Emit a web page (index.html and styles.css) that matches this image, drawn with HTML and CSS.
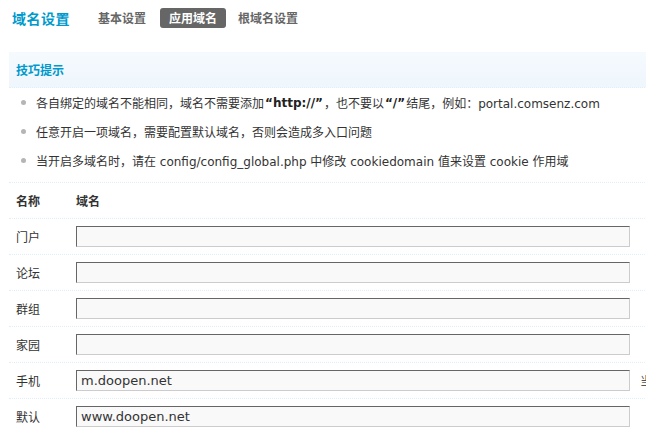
FILE: index.html
```html
<!DOCTYPE html>
<html lang="zh-CN">
<head>
<meta charset="utf-8">
<title>域名设置</title>
<link rel="stylesheet" href="styles.css">
</head>
<body>
<div class="page">
  <div class="itemtitle">
    <h3 class="title">域名设置</h3>
    <ul class="tabs">
      <li class="tab">基本设置</li>
      <li class="tab current">应用域名</li>
      <li class="tab">根域名设置</li>
    </ul>
  </div>

  <div class="tips">
    <div class="tips-head">技巧提示</div>
    <ul class="tips-list">
      <li>各自绑定的域名不能相同，域名不需要添加<b>“http://”</b>，也不要以<b>“/”</b>结尾，例如：portal.comsenz.com</li>
      <li>任意开启一项域名，需要配置默认域名，否则会造成多入口问题</li>
      <li>当开启多域名时，请在 config/config_global.php 中修改 cookiedomain 值来设置 cookie 作用域</li>
    </ul>
  </div>

  <div class="tb">
    <div class="row head"><span>名称</span><span>域名</span></div>
    <div class="row"><span>门户</span><input class="txt" type="text" value=""></div>
    <div class="row"><span>论坛</span><input class="txt" type="text" value=""></div>
    <div class="row"><span>群组</span><input class="txt" type="text" value=""></div>
    <div class="row"><span>家园</span><input class="txt" type="text" value=""></div>
    <div class="row"><span>手机</span><input class="txt" type="text" value="m.doopen.net"><span class="comment">当</span></div>
    <div class="row"><span>默认</span><input class="txt" type="text" value="www.doopen.net"></div>
  </div>
</div>
</body>
</html>
```

FILE: styles.css
```css
html, body {
  margin: 0;
  padding: 0;
  overflow: hidden;
  background: #fff;
}

body {
  font-family: "DejaVu Sans", "Noto Sans CJK SC", sans-serif;
  font-size: 12px;
  color: #333;
}

.page {
  width: 646px;
  height: 434px;
  overflow: hidden;
  padding-left: 9px;
  box-sizing: border-box;
}

.itemtitle {
  display: flex;
  align-items: center;
  padding-top: 8px;
  padding-left: 3px;
  height: 20px;
}

.title {
  margin: 0 18px 0 0;
  font-size: 14px;
  line-height: 20px;
  font-weight: bold;
  color: #0099cc;
  font-family: "Noto Sans CJK SC", sans-serif;
  letter-spacing: 0.5px;
}

.tabs {
  display: flex;
  gap: 2px;
  list-style: none;
  margin: 0;
  padding: 0;
}

.tab {
  padding: 0 10px;
  height: 20px;
  line-height: 20px;
  font-weight: bold;
  color: #666;
  font-family: "Noto Sans CJK SC", sans-serif;
}

.tab.current {
  background: #666;
  color: #fff;
  border-radius: 3px;
  padding: 0 9px;
  margin-left: 2px;
}

.tips {
  margin-top: 24px;
  width: 720px;
  padding-bottom: 7px;
}

.tips-head {
  height: 35px;
  line-height: 35px;
  padding-left: 7px;
  background: linear-gradient(#f5fafe, #eff6fc);
  border-bottom: 1px dotted #deeffb;
  color: #0099cc;
  font-weight: bold;
  font-family: "Noto Sans CJK SC", sans-serif;
}

.tips-list {
  list-style: none;
  margin: 0;
  padding: 0;
}

.tips-list li {
  display: flex;
  align-items: center;
  height: 29px;
  white-space: nowrap;
}

.tips-list li::before {
  content: "";
  flex: none;
  width: 5px;
  height: 5px;
  border-radius: 50%;
  background: #b5b5b5;
  margin: 0 10px 0 12px;
}

.tips-list b {
  color: #222;
  margin: 0 1px;
}

.tb {
  width: 720px;
}

.row {
  display: flex;
  align-items: center;
  height: 35px;
  border-top: 1px dotted #deeffb;
  padding-left: 7px;
  white-space: nowrap;
}

.row > span:first-child {
  width: 60px;
  flex: none;
}

.row.head {
  font-weight: bold;
  font-family: "Noto Sans CJK SC", sans-serif;
}

.txt {
  width: 554px;
  height: 21px;
  box-sizing: border-box;
  margin: 0;
  padding: 2px 4px;
  border: 1px solid;
  border-color: #666 #ccc #ccc #666;
  background: #f9f9f9;
  font-family: "DejaVu Sans", sans-serif;
  font-size: 13px;
  line-height: 15px;
  color: #333;
  outline: none;
}

.comment {
  margin-left: 10px;
  color: #555;
}
```
